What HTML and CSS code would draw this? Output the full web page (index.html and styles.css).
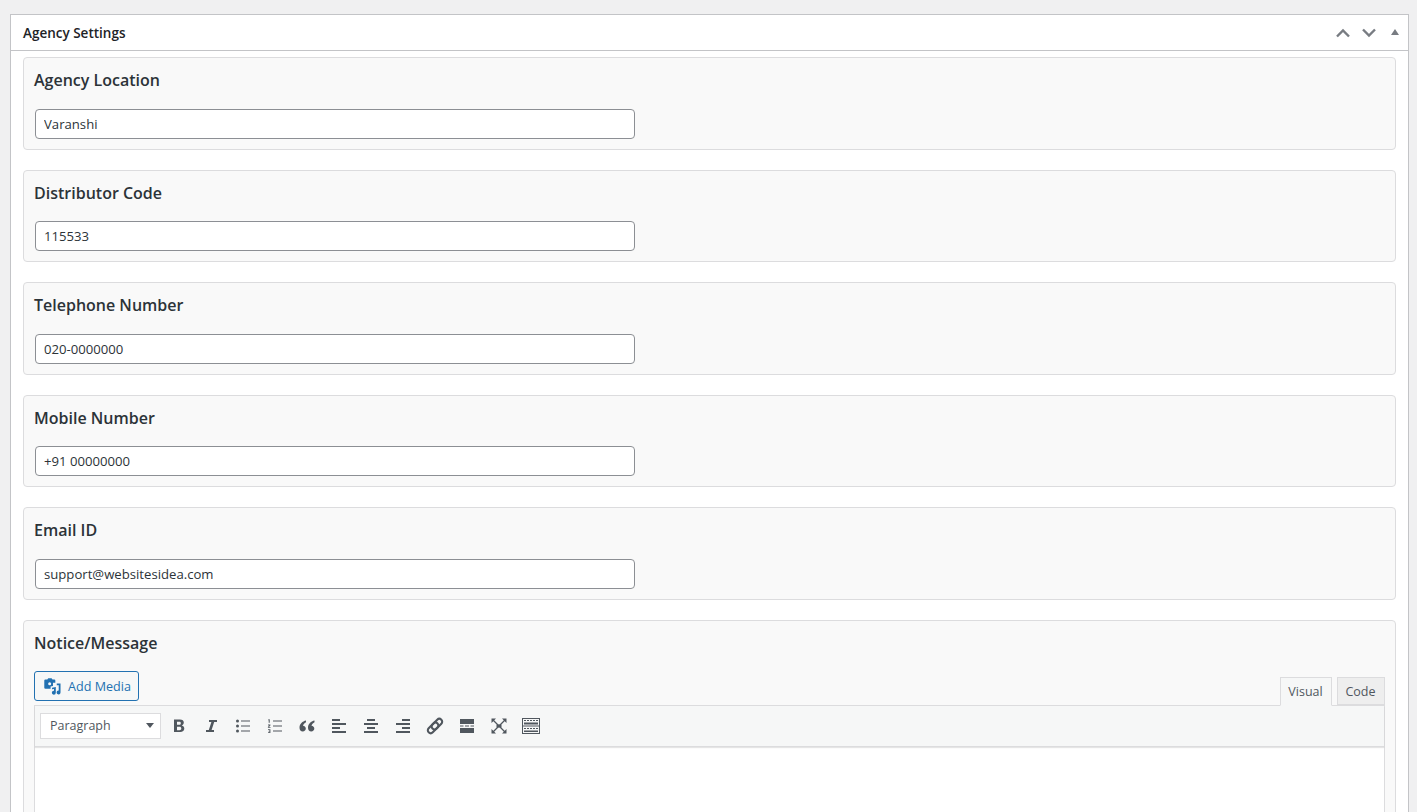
FILE: index.html
```html
<!DOCTYPE html>
<html lang="en">
<head>
<meta charset="utf-8">
<title>Agency Settings</title>
<link rel="stylesheet" href="styles.css">
</head>
<body>
<div class="postbox">
  <div class="postbox-header">
    <h2 class="postbox-title">Agency Settings</h2>
    <div class="handle-actions">
      <svg class="handle" width="16" height="10" viewBox="0 0 16 10"><path d="M2 8.500 8 2.500l6 6" fill="none" stroke="#787c82" stroke-width="2.400"/></svg>
      <svg class="handle" width="16" height="10" viewBox="0 0 16 10"><path d="M2 1.500 8 7.500l6-6" fill="none" stroke="#787c82" stroke-width="2.400"/></svg>
      <svg class="handle handle-last" width="8" height="6" viewBox="0 0 8 6"><path d="M4 0 8 6H0z" fill="#787c82"/></svg>
    </div>
  </div>
  <div class="inside">
    <section class="field"><h3 class="field-title">Agency Location</h3><input class="text-input" type="text" value="Varanshi"></section>
    <section class="field"><h3 class="field-title">Distributor Code</h3><input class="text-input" type="text" value="115533"></section>
    <section class="field"><h3 class="field-title">Telephone Number</h3><input class="text-input" type="text" value="020-0000000"></section>
    <section class="field"><h3 class="field-title">Mobile Number</h3><input class="text-input" type="text" value="+91 00000000"></section>
    <section class="field"><h3 class="field-title">Email ID</h3><input class="text-input" type="text" value="support@websitesidea.com"></section>
    <section class="field field-editor">
      <h3 class="field-title">Notice/Message</h3>
      <div class="editor-head">
        <button class="media-btn" type="button">
          <svg width="17" height="17" viewBox="0 0 18 18"><path fill="#2271b1" fill-rule="evenodd" d="M1.500 1.500H3.500l1-1.200h3.500l1 1.200h1.800A1.200 1.200 0 0 1 12 2.700V5H9.500v3.500L7 9v2.500H1.500A1.200 1.200 0 0 1 .3 10.300V2.700A1.200 1.200 0 0 1 1.500 1.500zM6 4.500a1.600 1.600 0 1 0 0 3.200 1.600 1.600 0 0 0 0-3.200z"/><path fill="#2271b1" d="M13.500 5.700H17.500V15.300a2.100 2.100 0 1 1-1.900-2.100V7.800h-2.100zM8.500 10.200l4-.7v6.100a2.100 2.100 0 1 1-1.900-2.100v-1.900l-2.100.4z"/></svg>
          <span>Add Media</span>
        </button>
        <div class="tabs">
          <span class="tab tab-active">Visual</span>
          <span class="tab tab-code">Code</span>
        </div>
      </div>
      <div class="editor">
        <div class="toolbar">
          <div class="format-select"><span class="format-label">Paragraph</span><svg width="8" height="5" viewBox="0 0 8 5"><path d="M0 0h8L4 5z" fill="#50575e"/></svg></div>
          <div class="tools">
            <span class="tool"><svg width="20" height="20" viewBox="0 0 20 20"><path fill="#50575e" fill-rule="evenodd" d="M5 3.500h6c2.400 0 3.800 1.200 3.800 3.100 0 1.400-.8 2.400-2 2.800 1.500.3 2.500 1.500 2.500 3.100 0 2.200-1.600 3.500-4.100 3.500H5zM8 5.800v2.900h2.200c1 0 1.600-.5 1.600-1.500s-.6-1.400-1.600-1.400zM8 10.800v3.400h2.500c1.100 0 1.800-.6 1.800-1.700s-.7-1.700-1.900-1.700z"/></svg></span>
            <span class="tool"><svg width="20" height="20" viewBox="0 0 20 20"><path fill="#50575e" d="M8 4h8v2h-2.800l-2.600 8H13v2H5v-2h2.800l2.600-8H8z"/></svg></span>
            <span class="tool"><svg width="20" height="20" viewBox="0 0 20 20"><g fill="#50575e"><circle cx="4.500" cy="5" r="1.500"/><circle cx="4.500" cy="10" r="1.500"/><circle cx="4.500" cy="15" r="1.500"/><path d="M8 4.500h9v1H8zM8 9.500h9v1H8zM8 14.500h9v1H8z"/></g></svg></span>
            <span class="tool"><svg width="20" height="20" viewBox="0 0 20 20"><g fill="#50575e"><path d="M8 4.500h9v1H8zM8 9.500h9v1H8zM8 14.500h9v1H8z"/><path d="M3.500 3.200h1.200v3.600h-1V4.200h-.6zM3 8.600h2.400v.8L4 11h1.500v.8H2.900v-.8l1.500-1.600H3zM3 13.200h2.400v3.800H3v-.8h1.500v-.7H3.600v-.7h.9v-.8H3z"/></g></svg></span>
            <span class="tool"><svg width="20" height="20" viewBox="0 0 20 20"><path fill="#50575e" d="M9 4.500c-3.500.8-6.500 3.200-6.500 7.300 0 2.200 1.300 3.700 3.300 3.700 1.700 0 3-1.200 3-2.900S7.700 9.900 6 9.700c.3-1.500 1.500-2.800 3-3.500zM17.500 4.500c-3.500.8-6.500 3.200-6.500 7.300 0 2.200 1.300 3.700 3.300 3.700 1.700 0 3-1.200 3-2.900s-1.100-2.700-2.800-2.900c.3-1.500 1.500-2.800 3-3.500z"/></svg></span>
            <span class="tool"><svg width="20" height="20" viewBox="0 0 20 20"><path fill="#50575e" d="M3 3h8v2H3zM3 7h14v2H3zM3 11h8v2H3zM3 15h14v2H3z"/></svg></span>
            <span class="tool"><svg width="20" height="20" viewBox="0 0 20 20"><path fill="#50575e" d="M6 3h8v2H6zM3 7h14v2H3zM6 11h8v2H6zM3 15h14v2H3z"/></svg></span>
            <span class="tool"><svg width="20" height="20" viewBox="0 0 20 20"><path fill="#50575e" d="M9 3h8v2H9zM3 7h14v2H3zM9 11h8v2H9zM3 15h14v2H3z"/></svg></span>
            <span class="tool"><svg width="20" height="20" viewBox="0 0 20 20"><g fill="none" stroke="#50575e" stroke-width="2.100"><rect x="-6.800" y="-2.900" width="12.500" height="5.800" rx="2.900" transform="translate(12.300 7.700) rotate(-45)"/><rect x="-5.700" y="-2.900" width="12.500" height="5.800" rx="2.900" transform="translate(7.700 12.300) rotate(-45)"/></g></svg></span>
            <span class="tool"><svg width="20" height="20" viewBox="0 0 20 20"><path fill="#50575e" d="M3 3h14v5H3zM3 12h14v5H3zM3 9.500h3.500v1H3zM8 9.500h4v1H8zM13.500 9.500H17v1h-3.500z"/></svg></span>
            <span class="tool"><svg width="20" height="20" viewBox="0 0 20 20"><g fill="#50575e"><path d="M2.500 2.500h4.500L2.500 7zM17.500 2.500V7L13 2.500zM2.500 17.500V13L7 17.500zM17.500 17.500H13l4.500-4.500z"/><path d="M7.500 8.500h5v3h-5z"/></g><path d="M4 4l12 12M16 4 4 16" stroke="#50575e" stroke-width="1.300"/></svg></span>
            <span class="tool"><svg width="20" height="20" viewBox="0 0 20 20"><path fill="#50575e" fill-rule="evenodd" d="M1 2h18v16H1zM2 3v6.500h16V3zM2 10.500V17h16v-6.500zM3 4h2v1H3zM6 4h2v1H6zM9 4h2v1H9zM12 4h2v1h-2zM15 4h2v1h-2zM3 6.500h14V8.500H3zM3 12h2v1H3zM6 12h2v1H6zM9 12h2v1H9zM12 12h2v1h-2zM15 12h2v1h-2zM3 14.500h14v1.500H3z"/></svg></span>
          </div>
        </div>
        <div class="editor-body"></div>
      </div>
    </section>
  </div>
</div>
</body>
</html>
```
FILE: styles.css
```css
* { box-sizing: border-box; }
html, body { height: 812px; overflow: hidden; }
body {
  margin: 0;
  padding: 14px 8.500px 0 10px;
  background: #f0f0f1;
  font-family: "Open Sans", "Noto Sans", sans-serif;
  color: #2c3338;
}
.postbox {
  background: #fff;
  border: 1px solid #c3c4c7;
  border-bottom: 0;
  height: 798px;
  overflow: hidden;
}
.postbox-header {
  display: flex;
  align-items: center;
  justify-content: space-between;
  height: 36px;
  border-bottom: 1px solid #c3c4c7;
  padding: 0 12px;
}
.postbox-title {
  margin: 0;
  font-size: 13.500px;
  font-weight: 600;
  color: #1d2327;
}
.handle-actions { display: flex; align-items: center; gap: 10px; margin-right: -3px; }
.handle-last { margin-left: 4px; margin-top: -2px; }
.inside { padding: 6px 12px 0 12px; }
.field {
  height: 92.500px;
  margin-bottom: 20px;
  padding: 0 10px;
  background: #f9f9f9;
  border: 1px solid #dcdcde;
  border-radius: 4px;
}
.field-editor { height: auto; padding-bottom: 10px; }
.field-title {
  margin: 0;
  padding-top: 11px;
  height: 50.900px;
  font-size: 16px;
  line-height: 23px;
  font-weight: 600;
  color: #2c3338;
}
.text-input {
  display: block;
  width: 600px;
  height: 30px;
  margin-left: 1px;
  padding: 0 8px;
  background: #fff;
  border: 1px solid #8c8f94;
  border-radius: 4px;
  font-family: inherit;
  font-size: 13.150px;
  color: #2c3338;
}
.editor-head {
  display: flex;
  justify-content: space-between;
  align-items: flex-end;
  height: 34px;
}
.media-btn {
  display: flex;
  align-items: center;
  gap: 7px;
  align-self: flex-start;
  width: 105px;
  height: 30px;
  padding: 0 0 0 9px;
  background: #f6f7f7;
  border: 1px solid #2271b1;
  border-radius: 3px;
  font-family: inherit;
  font-size: 12.600px;
  color: #2271b1;
}
.tabs { display: flex; gap: 5px; position: relative; z-index: 1; margin-bottom: -1px; }
.tab {
  display: block;
  height: 28px;
  width: 48px;
  background: #eeeeee;
  border: 1px solid #dcdcde;
  font-size: 12.500px;
  line-height: 27px;
  text-align: center;
  color: #50575e;
}
.tab-active {
  height: 29px;
  width: 52px;
  background: #f6f7f7;
  border-bottom-color: #f6f7f7;
}
.editor {
  border: 1px solid #dcdcde;
  background: #fff;
  height: 200px;
}
.toolbar {
  display: flex;
  align-items: center;
  height: 41px;
  padding: 0 5px;
  background: #f6f7f7;
  border-bottom: 1px solid #dcdcde;
  box-shadow: 0 1px 1px rgba(0, 0, 0, .1);
}
.format-select {
  display: flex;
  align-items: center;
  justify-content: space-between;
  width: 121px;
  height: 26px;
  padding: 0 6px 1px 9px;
  background: #fff;
  border: 1px solid #dcdcde;
  font-size: 12.500px;
  color: #50575e;
}
.tools { display: flex; margin-left: 2px; }
.tool { display: flex; width: 32px; height: 26px; align-items: center; justify-content: center; }
.editor-body { height: 150px; }
```
